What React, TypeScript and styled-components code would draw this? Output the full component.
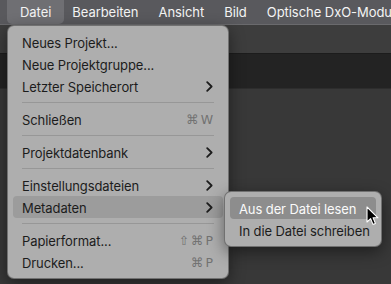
import React from "react"
import styled, { createGlobalStyle } from "styled-components"

const GlobalStyle = createGlobalStyle`
  html, body {
    margin: 0;
    padding: 0;
    background: #383838;
  }
  body {
    font-family: Inter, "Noto Sans", "DejaVu Sans", sans-serif;
    -webkit-font-smoothing: antialiased;
  }
`

const Screen = styled.div`
  position: relative;
  width: 391px;
  height: 284px;
  overflow: hidden;
  display: flex;
  flex-direction: column;
  background: #383838;
`

const MenuBar = styled.div`
  height: 24px;
  display: flex;
  align-items: stretch;
  padding-left: 7px;
  background: #59595d;
  border-bottom: 1px solid #6a6a6d;
  flex: none;
`

const MenuTitle = styled.div<{ $active?: boolean }>`
  display: flex;
  align-items: center;
  padding: 0 ${p => (p.$active ? "13px" : "10px")};
  margin-right: ${p => (p.$active ? "-2px" : "0")};
  font-size: 13px;
  letter-spacing: -0.05px;
  color: #f4f4f4;
  white-space: nowrap;
  border-radius: 0 0 5px 5px;
  background: ${p => (p.$active ? "#6f6f73" : "transparent")};
`

const Toolbar = styled.div`
  height: 28px;
  flex: none;
  background: #3d3d3d;
  border-bottom: 1px solid #1c1c1c;
`

const Strip = styled.div`
  height: 34px;
  flex: none;
  background: #232323;
  border-bottom: 1px solid #2d2d2d;
`

const Content = styled.div`
  flex: 1;
  background: #383838;
`

const Menu = styled.div<{ $width: number }>`
  position: absolute;
  width: ${p => p.$width}px;
  box-sizing: border-box;
  padding: 5px;
  background: #aeaeae;
  border-radius: 7px;
  border: 0.5px solid rgba(0, 0, 0, 0.35);
  box-shadow: 0 5px 16px rgba(0, 0, 0, 0.45);
`

const MainMenu = styled(Menu)`
  left: 7px;
  top: 25px;
`

const SubMenu = styled(Menu)`
  left: 211px;
  top: -5px;
  z-index: 2;
`

const Item = styled.div<{ $active?: boolean; $strong?: boolean }>`
  position: relative;
  height: 22px;
  display: flex;
  align-items: center;
  padding: 0 10px 0 9px;
  border-radius: 4px;
  font-size: 13px;
  letter-spacing: -0.1px;
  color: ${p => (p.$strong ? "#fafafa" : "#1c1c1c")};
  background: ${p =>
    p.$strong ? "#8d8d8d" : p.$active ? "#9c9c9c" : "transparent"};
  white-space: nowrap;
`

const Label = styled.span`
  flex: 1;
  padding-top: 1px;
`

const Shortcut = styled.span`
  color: #727272;
  font-family: "DejaVu Sans", Inter, sans-serif;
  font-size: 12.5px;
  letter-spacing: 2px;
  margin-right: -2px;
`

const Separator = styled.div`
  height: 11px;
  display: flex;
  align-items: center;
  padding: 0 9px;
  &::after {
    content: "";
    flex: 1;
    height: 1px;
    background: #979797;
  }
`

const Pointer = styled.svg`
  position: absolute;
  left: 366px;
  top: 206px;
  z-index: 3;
`

function Chevron() {
  return (
    <svg width="7" height="11" viewBox="0 0 7 11">
      <path
        d="M1.2 1.2 L5.6 5.5 L1.2 9.8"
        fill="none"
        stroke="#1c1c1c"
        strokeWidth="1.8"
        strokeLinecap="round"
        strokeLinejoin="round"
      />
    </svg>
  )
}

export default function App() {
  return (
    <Screen>
      <GlobalStyle />
      <MenuBar>
        <MenuTitle $active>Datei</MenuTitle>
        <MenuTitle>Bearbeiten</MenuTitle>
        <MenuTitle>Ansicht</MenuTitle>
        <MenuTitle>Bild</MenuTitle>
        <MenuTitle>Optische DxO-Module</MenuTitle>
      </MenuBar>
      <Toolbar />
      <Strip />
      <Content />

      <MainMenu $width={222}>
        <Item><Label>Neues Projekt...</Label></Item>
        <Item><Label>Neue Projektgruppe...</Label></Item>
        <Item><Label>Letzter Speicherort</Label><Chevron /></Item>
        <Separator />
        <Item><Label>Schließen</Label><Shortcut>⌘W</Shortcut></Item>
        <Separator />
        <Item><Label>Projektdatenbank</Label><Chevron /></Item>
        <Separator />
        <Item><Label>Einstellungsdateien</Label><Chevron /></Item>
        <Item $active>
          <Label>Metadaten</Label>
          <Chevron />
          <SubMenu $width={158}>
            <Item $strong><Label>Aus der Datei lesen</Label></Item>
            <Item><Label>In die Datei schreiben</Label></Item>
          </SubMenu>
        </Item>
        <Separator />
        <Item><Label>Papierformat...</Label><Shortcut>⇧⌘P</Shortcut></Item>
        <Item><Label>Drucken...</Label><Shortcut>⌘P</Shortcut></Item>
      </MainMenu>

      <Pointer width="13" height="20" viewBox="0 0 13 20">
        <path
          d="M1 1 L1 16 L4.6 12.6 L7 18.4 L9.4 17.4 L7.1 11.8 L12 11.8 Z"
          fill="#000"
          stroke="#fff"
          strokeWidth="1.1"
          strokeLinejoin="round"
        />
      </Pointer>
    </Screen>
  )
}
